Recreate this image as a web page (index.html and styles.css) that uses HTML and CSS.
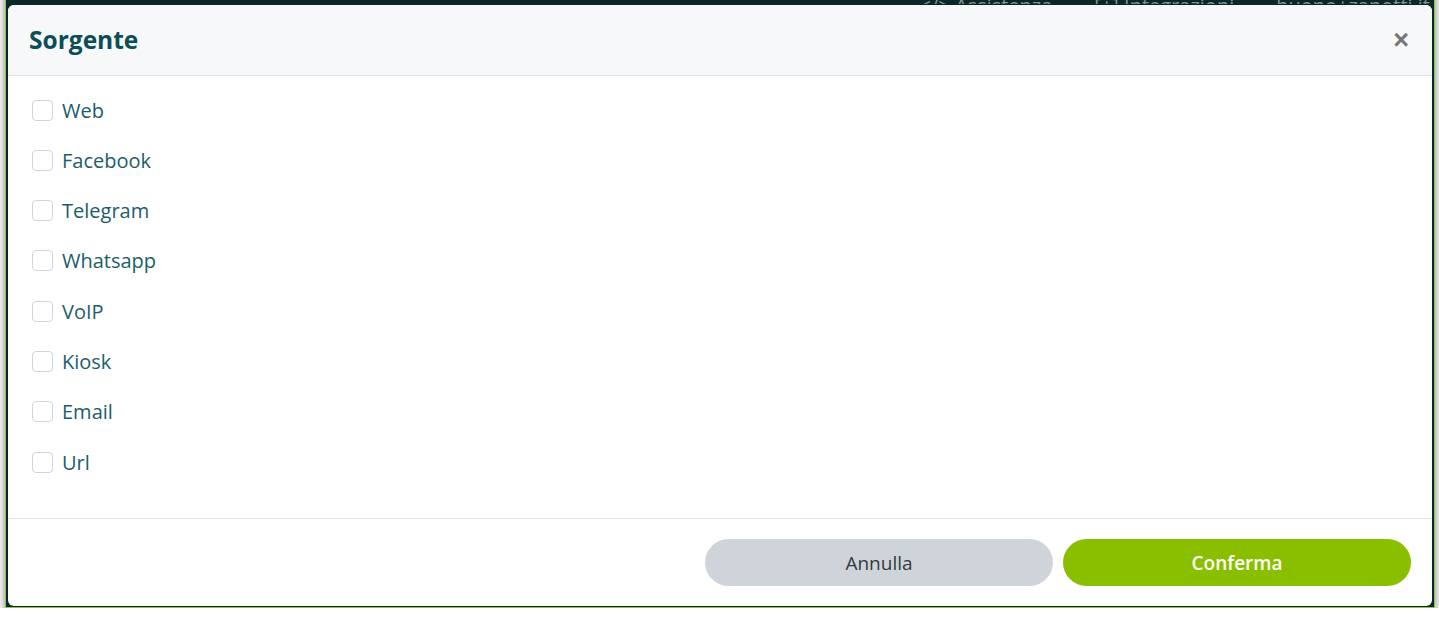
FILE: index.html
```html
<!DOCTYPE html>
<html lang="it">
<head>
  <meta charset="UTF-8" />
  <meta name="viewport" content="width=device-width, initial-scale=1.0"/>
  <title>Sorgente</title>
  <link rel="stylesheet" href="styles.css">
</head>
<body>
  <div class="backdrop">
    <div class="topnav">
      <span class="nav-item">&lt;/&gt; Assistenza</span>
      <span class="nav-item">[+] Integrazioni</span>
      <span class="nav-item">buono+zanotti.it</span>
    </div>

    <div class="modal">
      <div class="modal-header">
        <h5 class="modal-title">Sorgente</h5>
        <button class="close-btn" aria-label="Chiudi">&times;</button>
      </div>

      <div class="modal-body">
        <label class="check-row"><input type="checkbox" class="check-box"><span>Web</span></label>
        <label class="check-row"><input type="checkbox" class="check-box"><span>Facebook</span></label>
        <label class="check-row"><input type="checkbox" class="check-box"><span>Telegram</span></label>
        <label class="check-row"><input type="checkbox" class="check-box"><span>Whatsapp</span></label>
        <label class="check-row"><input type="checkbox" class="check-box"><span>VoIP</span></label>
        <label class="check-row"><input type="checkbox" class="check-box"><span>Kiosk</span></label>
        <label class="check-row"><input type="checkbox" class="check-box"><span>Email</span></label>
        <label class="check-row"><input type="checkbox" class="check-box"><span>Url</span></label>
      </div>

      <div class="modal-footer">
        <button class="btn btn-cancel">Annulla</button>
        <button class="btn btn-confirm">Conferma</button>
      </div>
    </div>
  </div>
</body>
</html>
```

FILE: styles.css
```css
:root {
  --teal-dark: #0b4d59;
  --teal-text: #1c5d69;
  --lime: #8abf00;
  --grey-btn: #cfd4db;
  --line: #dee2e6;
  --overlay: #0c2727;
}
body {
  margin: 0;
  background: #ffffff;
  font-family: 'Open Sans', 'Noto Sans', sans-serif;
  overflow: hidden;
}
.backdrop {
  margin-left: 5px;
  margin-top: -21px;
  width: 1428px;
  border: 1px solid #8cc63f;
  background: var(--overlay);
  box-shadow: 0 5px 9px rgba(0, 0, 0, 0.5);
}
.topnav {
  height: 24px;
  display: flex;
  justify-content: flex-end;
  align-items: flex-end;
  gap: 42px;
  padding-right: 4px;
  overflow: hidden;
}
.nav-item {
  color: #7f9494;
  font-size: 20px;
  line-height: 20px;
  margin-bottom: -12px;
}
.modal {
  margin: 1px 2px 1px 2px;
  background: #ffffff;
  border-radius: 6px;
  overflow: hidden;
}
.modal-header {
  height: 70px;
  background: #f7f8fa;
  border-bottom: 1px solid var(--line);
  display: flex;
  align-items: center;
  justify-content: space-between;
  padding: 0 20px 0 21px;
}
.modal-title {
  margin: 0 0 1px 0;
  font-size: 24.5px;
  font-weight: 700;
  color: var(--teal-dark);
}
.close-btn {
  background: none;
  border: none;
  padding: 0 3px;
  font-size: 27px;
  font-weight: 700;
  color: #777;
  line-height: 1;
  font-family: 'Liberation Sans', sans-serif;
}
.modal-body {
  display: flex;
  flex-direction: column;
  gap: 30.3px;
  padding: 24px 24px 46px 24px;
}
.check-row {
  display: flex;
  align-items: center;
  height: 20px;
  font-size: 20px;
  color: var(--teal-text);
}
.check-box {
  appearance: none;
  margin: 0 9px 0 0;
  width: 21px;
  height: 21px;
  border: 1px solid #cfd5dc;
  border-radius: 4px;
  background: #fff;
}
.modal-footer {
  border-top: 1px solid var(--line);
  display: flex;
  justify-content: flex-end;
  gap: 10px;
  padding: 20px 21px 20px 0;
}
.btn {
  width: 348px;
  height: 47px;
  border: none;
  border-radius: 24px;
  font-family: 'Open Sans', 'Noto Sans', sans-serif;
  font-size: 19px;
}
.btn-cancel {
  background: var(--grey-btn);
  color: #343a40;
}
.btn-confirm {
  background: var(--lime);
  color: #ffffff;
  font-weight: 600;
}
```
